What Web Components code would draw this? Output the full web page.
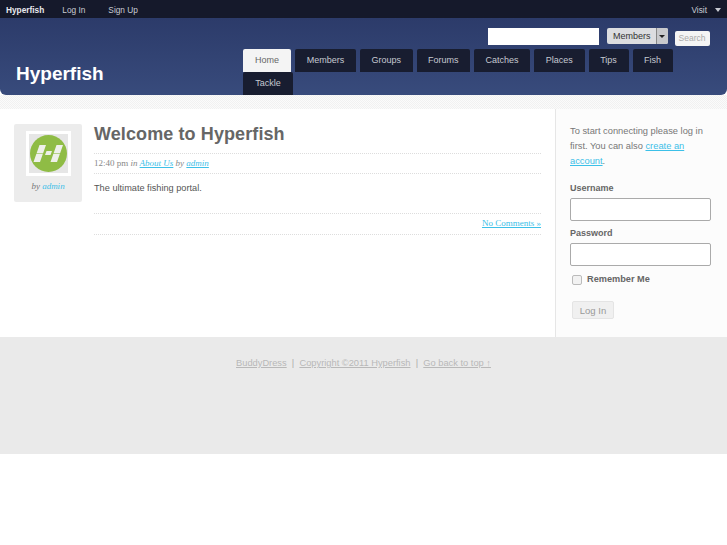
<!DOCTYPE html>
<html><head><meta charset="utf-8"><style>
html,body{margin:0;padding:0;background:#fff;font-family:"Liberation Sans",Arial,sans-serif;}
</style></head><body>
<hf-topbar></hf-topbar>
<hf-header></hf-header>
<hf-band></hf-band>
<hf-main>
  <hf-post></hf-post>
  <hf-login slot="side"></hf-login>
</hf-main>
<hf-footer></hf-footer>
<script>
const dither='repeating-conic-gradient(#f1f1f1 0 25%,#fbfbfb 0 50%) 0 0/2px 2px';
function def(name,css,html){
  customElements.define(name,class extends HTMLElement{
    constructor(){super();const r=this.attachShadow({mode:'open'});r.innerHTML='<style>'+css+'</style>'+html;}
  });
}
def('hf-topbar',`
:host{display:flex;align-items:center;height:18px;background:#15192b;font-size:8.3px;color:#c9ccd4;padding:1px 6px 0 6px;box-sizing:border-box}
b{color:#e8e9ee;font-weight:700;margin-right:18px}
span{margin-right:23px}
.v{margin:0 0 0 auto;display:flex;align-items:center;gap:8px}
i{display:block;width:0;height:0;border:3.5px solid transparent;border-top:4px solid #c9ccd4;border-bottom:0}
`,`<b>Hyperfish</b><span>Log In</span><span>Sign Up</span><div class="v">Visit<i></i></div>`);
def('hf-tab',`
:host{display:block;height:23px;line-height:22px;width:var(--w);text-align:center;background:#181d30;color:#c6c9d0;font-size:9px;border-radius:2px 2px 0 0;box-sizing:border-box;white-space:nowrap}
:host([active]){background:#f4f4f4;color:#666}
`,`<slot></slot>`);
def('hf-header',`
:host{display:flex;height:77px;background:linear-gradient(#2c3b6a,#384b7c);border-radius:0 0 6px 6px;box-sizing:border-box;padding:0 0 0 16px}
h1{margin:0;color:#fff;font-size:19px;font-weight:700;line-height:23px;align-self:flex-start;margin-top:44px;width:227px;flex:none}
.r{display:flex;flex-direction:column;flex:1;min-width:0}
.s{display:flex;height:31px;padding:10px 0 0 245px;box-sizing:border-box;align-items:flex-start}
.q{width:111px;height:17px;background:#fff;box-sizing:border-box}
.m{display:flex;height:16px;margin-left:8px;font-size:9px;line-height:16px;color:#333;background:#dcdde0;border-radius:2px}
.m span{padding:0 5px 0 6px}
.m u{display:flex;align-items:center;justify-content:center;width:11px;background:#c8c9cc;border-left:1px solid #888;border-radius:0 2px 2px 0}
.m i{display:block;border:3px solid transparent;border-top:3px solid #222;border-bottom:0}
.b{margin:3px 0 0 7px;height:15px;width:35px;background:#f4f4f4;color:#aaa;font-size:8.5px;line-height:15px;text-align:center;border-radius:2px}
.t{display:flex;flex-wrap:wrap;gap:0 4px;width:445px}
`,`<h1>Hyperfish</h1><div class="r"><div class="s"><div class="q"></div><div class="m"><span>Members</span><u><i></i></u></div><div class="b">Search</div></div>
<div class="t"><hf-tab active style="--w:48px">Home</hf-tab><hf-tab style="--w:61px">Members</hf-tab><hf-tab style="--w:52.5px">Groups</hf-tab><hf-tab style="--w:53.5px">Forums</hf-tab><hf-tab style="--w:56px">Catches</hf-tab><hf-tab style="--w:50.5px">Places</hf-tab><hf-tab style="--w:40px">Tips</hf-tab><hf-tab style="--w:40px">Fish</hf-tab><hf-tab style="--w:50px">Tackle</hf-tab></div></div>`);
def('hf-band',`:host{display:block;height:14px;background:${dither}}`,``);
def('hf-main',`
:host{display:grid;grid-template-columns:556px 1fr;height:228px;background:#fff}
.a{background:#fff;border-right:1px solid #e6e6e6;min-width:0}
.b{background:#fcfcfc;min-width:0}
`,`<div class="a"><slot></slot></div><div class="b"><slot name="side"></slot></div>`);
def('hf-avatar',`
:host{display:flex;flex-direction:column;align-items:center;width:68px;height:78px;background:#ececec;border-radius:2px;flex:none;box-sizing:border-box;padding-top:7px}
.f{width:45px;height:45px;background:#fff;padding:3px;box-sizing:border-box}
.g{width:39px;height:39px;background:#e6e6e6;display:flex;align-items:center;justify-content:center}
svg{display:block}
p{margin:4px 0 0;font:italic 9px/12px "Liberation Serif",serif;color:#777}
a{color:#3cc0e8}
`,`<div class="f"><div class="g"><svg width="37" height="37" viewBox="0 0 37 37"><circle cx="18.5" cy="18.5" r="18.5" fill="#8fbc45"/><path fill="#eef0ea" d="M9.5 10H16L10 27H3.5ZM26.5 10H33L27 27H20.5ZM16.5 16H22L20.5 20H15Z"/><path stroke="#8fbc45" stroke-width=".6" fill="none" d="M5 18.5H14M22 18.5H31"/></svg></div></div><p>by <a>admin</a></p>`);
def('hf-post',`
:host{display:flex;padding:15px 14px 0 14px;gap:12px}
.c{flex:1;min-width:0}
h2{margin:0;font-size:18px;line-height:21px;height:30px;color:#666;font-weight:700;letter-spacing:.1px;border-bottom:1px dotted #ddd;box-sizing:border-box}
.meta{font:italic 9px/19px "Liberation Serif",serif;color:#888;height:20px;border-bottom:1px dotted #ddd;box-sizing:border-box}
.meta span{font-style:normal}
a{color:#3cc0e8;text-decoration:underline}
p{margin:0;font-size:9.2px;line-height:14px;color:#555;padding:7px 0 0;height:39px;box-sizing:border-box}
.n{border-top:1px dotted #ddd;border-bottom:1px dotted #ddd;height:22px;box-sizing:border-box;text-align:right;font:9px/19px "Liberation Serif",serif}
`,`<hf-avatar></hf-avatar><div class="c"><h2>Welcome to Hyperfish</h2><div class="meta"><span>12:40 pm</span> in <a>About Us</a> by <a>admin</a></div><p>The ultimate fishing portal.</p><div class="n"><a>No Comments »</a></div></div>`);
def('hf-login',`
:host{display:block;padding:15px 16px 0 14px;font-size:9.3px;color:#777;line-height:15px}
p{margin:0 0 13px}
a{color:#3cc0e8;text-decoration:underline}
label{display:block;font-weight:700;font-size:9px;color:#666;line-height:13px;margin-bottom:3px}
.i{height:23px;background:#fff;border:1px solid #aaa;border-radius:2px;box-sizing:border-box;margin-bottom:6px;width:141px}
.r{display:flex;align-items:center;gap:5px;font-weight:700;font-size:9.2px;color:#666;margin-top:2px;margin-left:2px}
.x{width:10px;height:10px;border:1px solid #bbb;border-radius:2px;box-sizing:border-box;background:#f2f2f2}
.b{display:block;margin:14px 0 0 2px;width:42px;height:18px;line-height:17px;text-align:center;background:#f0f0f0;color:#999;border-radius:2px;border:1px solid #e4e4e4;box-sizing:border-box;font-size:9.5px}
`,`<p>To start connecting please log in first. You can also <a>create an</a> <a>account</a>.</p><label>Username</label><div class="i"></div><label>Password</label><div class="i"></div><div class="r"><div class="x"></div>Remember Me</div><div class="b">Log In</div>`);
def('hf-footer',`
:host{display:block;height:117px;background:#eaeaea;box-sizing:border-box;padding-top:20px;text-align:center;font-size:9.3px;line-height:13px;color:#aaa}
u{color:#b8b8b8}
`,`<u>BuddyDress</u> &nbsp;|&nbsp; <u>Copyright ©2011 Hyperfish</u> &nbsp;|&nbsp; <u>Go back to top ↑</u>`);
</script>
</body></html>
